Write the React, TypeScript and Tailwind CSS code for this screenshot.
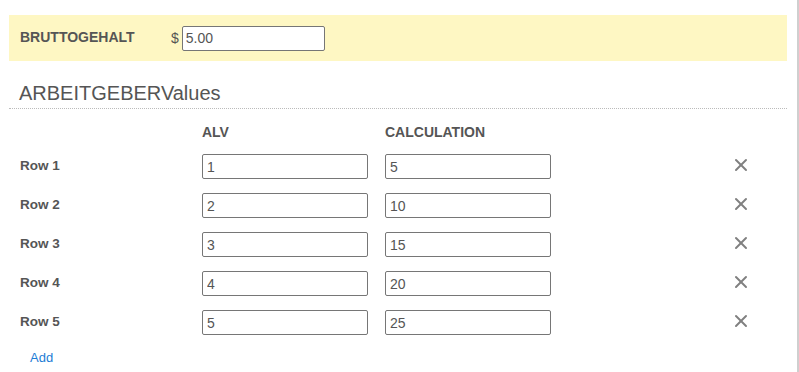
import { X } from "lucide-react";

const rows = [
  { label: "Row 1", alv: "1", calc: "5" },
  { label: "Row 2", alv: "2", calc: "10" },
  { label: "Row 3", alv: "3", calc: "15" },
  { label: "Row 4", alv: "4", calc: "20" },
  { label: "Row 5", alv: "5", calc: "25" },
];

const inputCls =
  "h-[25px] w-[166px] rounded-[2px] border border-[#767676] bg-white px-[4px] text-[14px] text-[#555] outline-none";

export default function App() {
  return (
    <div className="h-[372px] w-[799px] overflow-hidden border-r-2 border-[#cfcfcf] bg-white font-['Liberation_Sans',Arial,sans-serif] text-[#555]">
      <div className="ml-[9px] w-[778px]">
        {/* Gross salary band */}
        <div className="mt-[15px] flex h-[46px] items-center bg-[#fef7c3] pl-[11px]">
          <span className="w-[151px] pb-[2px] text-[14px] font-bold">BRUTTOGEHALT</span>
          <span className="mr-[3px] text-[14px]">$</span>
          <input className="h-[25px] w-[143px] rounded-[2px] border border-[#767676] bg-white px-[3px] text-[14px] text-[#555] outline-none" defaultValue="5.00" />
        </div>

        {/* Section heading */}
        <div className="border-b border-dotted border-[#bbb] pl-[10px] pt-[17px] text-[20px] leading-[30px]">
          ARBEITGEBERValues
        </div>

        {/* Column headers */}
        <div className="flex h-[38px] items-end pb-[5px] text-[14px] font-bold leading-[20px]">
          <div className="w-[193px]" />
          <div className="w-[183px]">ALV</div>
          <div>CALCULATION</div>
        </div>

        {rows.map((r) => (
          <div key={r.label} className="flex h-[39px] items-center">
            <div className="w-[193px] pb-[1px] pl-[11px] text-[13.5px] font-bold">{r.label}</div>
            <input className={inputCls} defaultValue={r.alv} />
            <input className={`${inputCls} ml-[17px]`} defaultValue={r.calc} />
            <button className="ml-[180px] pb-[4px] text-[#808080]">
              <X size={20} strokeWidth={2.4} />
            </button>
          </div>
        ))}

        <div className="mt-[8px] pl-[21px] text-[13px] leading-[16px] text-[#1c7cd5]">Add</div>
      </div>
    </div>
  );
}
